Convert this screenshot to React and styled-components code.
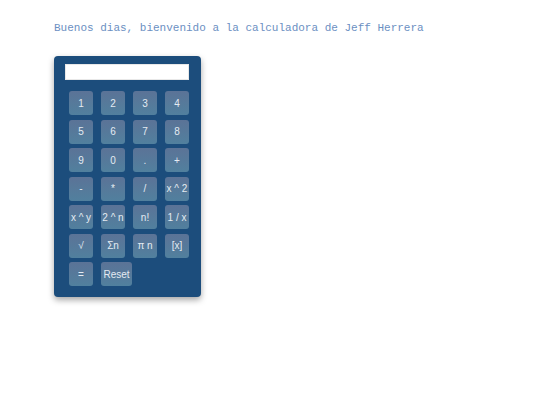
import React, { useState } from 'react';
import styled, { createGlobalStyle } from 'styled-components';

const GlobalStyle = createGlobalStyle`
  body {
    margin: 0;
    background: #ffffff;
    font-family: 'Liberation Sans', Arial, sans-serif;
  }
`;

const Page = styled.div`
  padding: 22px 54px;
`;

const Greeting = styled.h1`
  margin: 0 0 21px;
  font-family: 'Liberation Mono', 'Courier New', monospace;
  font-size: 11px;
  font-weight: normal;
  line-height: 13px;
  color: #6b8fc2;
`;

const Calculator = styled.div`
  width: 147px;
  box-sizing: border-box;
  padding: 8px 12px 11px 11px;
  background: #1c4d7c;
  border-radius: 4px;
  box-shadow: 0 3px 6px rgba(0, 0, 0, 0.35);
`;

const Display = styled.input`
  display: block;
  width: 124px;
  height: 16px;
  box-sizing: border-box;
  margin: 0 0 11px;
  padding: 0 3px;
  border: 1px solid #e8e8e8;
  background: #ffffff;
  font-family: 'Liberation Sans', Arial, sans-serif;
  font-size: 10px;
  outline: none;
`;

const Keys = styled.div`
  display: grid;
  grid-template-columns: repeat(4, 24px);
  grid-auto-rows: 24px;
  column-gap: 8px;
  row-gap: 4.5px;
  padding-left: 4px;
`;

const Key = styled.button`
  width: ${({ wide }) => (wide ? '31px' : '24px')};
  height: 24px;
  padding: 0;
  border: none;
  border-radius: 3px;
  background: linear-gradient(to bottom, #5b7397, #51809e);
  color: #e4ebf2;
  font-family: 'Liberation Sans', Arial, sans-serif;
  font-size: 10px;
  white-space: nowrap;
  cursor: pointer;
`;

const keys = [
  '1', '2', '3', '4',
  '5', '6', '7', '8',
  '9', '0', '.', '+',
  '-', '*', '/', 'x ^ 2',
  'x ^ y', '2 ^ n', 'n!', '1 / x',
  '√', 'Σn', 'π n', '[x]',
  '=', 'Reset',
];

export default function App() {
  const [value, setValue] = useState('');

  const press = (k) => {
    if (k === 'Reset') setValue('');
    else setValue(value + k);
  };

  return (
    <Page>
      <GlobalStyle />
      <Greeting>Buenos dias, bienvenido a la calculadora de Jeff Herrera</Greeting>
      <Calculator>
        <Display value={value} onChange={(e) => setValue(e.target.value)} />
        <Keys>
          {keys.map((k) => (
            <Key key={k} wide={k === 'Reset'} onClick={() => press(k)}>
              {k}
            </Key>
          ))}
        </Keys>
      </Calculator>
    </Page>
  );
}
